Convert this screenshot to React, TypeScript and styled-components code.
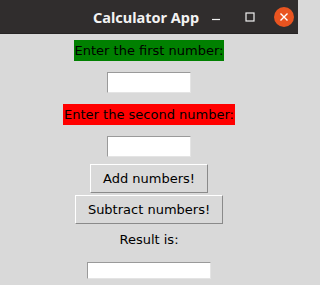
import React from "react";
import styled, { createGlobalStyle } from "styled-components";

const GlobalStyle = createGlobalStyle`
  html, body {
    margin: 0;
    padding: 0;
    background: #d9d9d9;
  }
  * {
    box-sizing: border-box;
  }
`;

const Window = styled.div`
  width: 298px;
  height: 285px;
  overflow: hidden;
  display: flex;
  flex-direction: column;
  background: #d9d9d9;
  font-family: "DejaVu Sans", sans-serif;
  font-size: 13px;
  color: #000;
`;

const TitleBar = styled.div`
  height: 34px;
  flex: none;
  display: flex;
  align-items: center;
  padding-left: 93px;
  background: #302d2d;
  border-bottom: 1px solid #262424;
`;

const Title = styled.span`
  font-family: "Noto Sans", "DejaVu Sans", sans-serif;
  font-weight: 700;
  font-size: 14.5px;
  color: #f2f2f2;
  white-space: nowrap;
`;

const Controls = styled.div`
  margin-left: auto;
  display: flex;
  height: 100%;
`;

const ControlCell = styled.div`
  width: 34px;
  display: flex;
  align-items: center;
  justify-content: center;
`;

const CloseDot = styled.div`
  width: 20px;
  height: 20px;
  border-radius: 50%;
  background: #e95420;
  display: flex;
  align-items: center;
  justify-content: center;
`;

const Body = styled.div`
  display: flex;
  flex-direction: column;
  align-items: center;
  padding-top: 6px;
`;

const Label = styled.div<{ $bg?: string; $gap?: number }>`
  height: 21px;
  padding: 0 1px;
  margin-top: ${(p) => p.$gap ?? 0}px;
  display: flex;
  align-items: center;
  background: ${(p) => p.$bg ?? "transparent"};
  white-space: nowrap;
`;

const Entry = styled.input<{ $w: number; $h?: number; $gap: number }>`
  width: ${(p) => p.$w}px;
  height: ${(p) => p.$h ?? 21}px;
  margin: ${(p) => p.$gap}px 0 0;
  padding: 0 2px;
  background: #fff;
  border-style: solid;
  border-width: 1px;
  border-color: #9a9a9a #e4e4e4 #e4e4e4 #9a9a9a;
  outline: none;
  font: inherit;
`;

const Button = styled.button<{ $gap: number }>`
  height: 29px;
  margin-top: ${(p) => p.$gap}px;
  padding: 0 12px;
  background: #d9d9d9;
  border-style: solid;
  border-width: 1px;
  border-color: #ffffff #8a8a8a #8a8a8a #ffffff;
  font: inherit;
  color: #000;
  white-space: nowrap;
`;

export default function App() {
  return (
    <>
      <GlobalStyle />
      <Window>
        <TitleBar>
          <Title>Calculator App</Title>
          <Controls>
            <ControlCell>
              <svg width="10" height="10" viewBox="0 0 10 10">
                <line x1="1" y1="7.5" x2="9" y2="7.5" stroke="#f0f0f0" strokeWidth="1.2" />
              </svg>
            </ControlCell>
            <ControlCell>
              <svg width="10" height="10" viewBox="0 0 10 10">
                <rect x="1" y="1" width="8" height="8" fill="none" stroke="#f0f0f0" strokeWidth="1.2" />
              </svg>
            </ControlCell>
            <ControlCell>
              <CloseDot>
                <svg width="10" height="10" viewBox="0 0 10 10">
                  <path d="M1.5 1.5 L8.5 8.5 M8.5 1.5 L1.5 8.5" stroke="#fff" strokeWidth="1.4" />
                </svg>
              </CloseDot>
            </ControlCell>
          </Controls>
        </TitleBar>
        <Body>
          <Label $bg="#008000">Enter the first number:</Label>
          <Entry $w={84} $gap={11} />
          <Label $bg="#ff0000" $gap={11}>Enter the second number:</Label>
          <Entry $w={84} $gap={11} />
          <Button $gap={7}>Add numbers!</Button>
          <Button $gap={2}>Subtract numbers!</Button>
          <Label $gap={5}>Result is:</Label>
          <Entry $w={124} $h={17} $gap={12} />
        </Body>
      </Window>
    </>
  );
}
